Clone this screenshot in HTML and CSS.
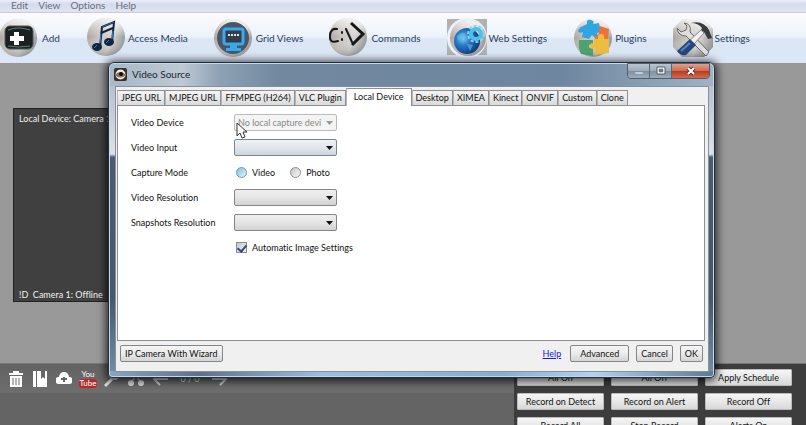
FILE: index.html
```html
<!DOCTYPE html>
<html lang="en">
<head>
<meta charset="utf-8">
<title>Video Source</title>
<link rel="stylesheet" href="styles.css">
</head>
<body>
<nav class="menubar">
  <a href="#">Edit</a><a href="#">View</a><a href="#">Options</a><a href="#">Help</a>
</nav>
<svg class="defs" width="0" height="0" aria-hidden="true">
  <defs>
    <linearGradient id="ball" x1="0" y1="0.300" x2="1" y2="0.700">
      <stop offset="0" stop-color="#a39d97"/><stop offset=".35" stop-color="#c9c4bf"/><stop offset=".65" stop-color="#d5d4d3"/><stop offset="1" stop-color="#8b8b8c"/>
    </linearGradient>
    <linearGradient id="shine" x1="0" y1="0" x2="0" y2="1">
      <stop offset="0" stop-color="#fff" stop-opacity=".8"/><stop offset=".5" stop-color="#fff" stop-opacity="0"/><stop offset="1" stop-color="#666" stop-opacity=".4"/>
    </linearGradient>
    <radialGradient id="globe" cx="35%" cy="40%" r="70%">
      <stop offset="0" stop-color="#7fd0f5"/><stop offset=".4" stop-color="#2779c4"/><stop offset="1" stop-color="#0c3478"/>
    </radialGradient>
  </defs>
</svg>
<header class="toolbar">
  <button class="tool"><svg viewBox="0 0 40 40"><circle cx="18" cy="20" r="19" fill="url(#ball)"/><circle cx="18" cy="20" r="19" fill="url(#shine)"/><rect x="5" y="8" width="28" height="23" rx="5" fill="#1b2020" stroke="#4d5758"/><path d="M8 12q10-4 22 0M8 28q10 2 22 0" stroke="#69797a" fill="none"/><path d="M14 14h5v4h5v5h-5v4h-5v-4h-4v-5h4z" fill="#fff"/></svg>Add</button>
  <button class="tool"><svg viewBox="0 0 40 40"><circle cx="20" cy="19" r="19" fill="url(#ball)"/><circle cx="20" cy="19" r="19" fill="url(#shine)"/><path d="M14 29l2-20 12-5-2 20" fill="none" stroke="#10233f" stroke-width="2"/><path d="M15 15l12-5" stroke="#10233f" stroke-width="2"/><path d="M16 9l12-5" stroke="#2b66a8" stroke-width="1"/><ellipse cx="11" cy="29" rx="5" ry="4" fill="#10233f"/><ellipse cx="23" cy="24" rx="5" ry="4" fill="#10233f"/><path d="M8 30l3-3M20 25l3-3M15 16l-1 9M27 13l-1 8" stroke="#2e83d8" stroke-width="1"/></svg>Access Media</button>
  <button class="tool"><svg viewBox="0 0 40 40"><circle cx="19" cy="20" r="19" fill="url(#ball)"/><circle cx="19" cy="20" r="19" fill="url(#shine)"/><circle cx="19" cy="20" r="16" fill="#49566a"/><rect x="10" y="11" width="19" height="15" rx="2" fill="#343c47" stroke="#38a9ec" stroke-width="3"/><path d="M16 27h7v3h4v3H12v-3h4z" fill="#38a9ec"/><path d="M14 17h11" stroke="#dce6ee" stroke-width="2" stroke-dasharray="2 1"/></svg>Grid Views</button>
  <button class="tool"><svg viewBox="0 0 40 40"><circle cx="19" cy="19" r="19" fill="url(#ball)"/><circle cx="19" cy="19" r="19" fill="url(#shine)"/><path d="M8 11Q2 10 1 17q-1 9 8 6M13 14v1M13 21v1M17 11l6 13" fill="none" stroke="#161616" stroke-width="2" stroke-linecap="round"/><path d="M22 5l12 11-11 11" fill="none" stroke="#161616" stroke-width="3"/></svg>Commands</button>
  <button class="tool"><svg viewBox="0 0 40 40"><path d="M0 1h40v36H0z" fill="#b0b1b2"/><circle cx="20" cy="20" r="20" fill="#eef1f5"/><circle cx="21" cy="20" r="18" fill="url(#ball)"/><circle cx="21" cy="20" r="18" fill="url(#shine)"/><circle cx="20" cy="23" r="13" fill="url(#globe)"/><path d="M10 18q5-5 9-2l-3 5-5 1zM20 26l6 1-3 6z" fill="#64bdea" opacity=".6"/><circle cx="29" cy="16" r="5" fill="none" stroke="#53bfe9" stroke-width="4"/><circle cx="29" cy="16" r="8" fill="none" stroke="#7ed7f4" stroke-width="2" stroke-dasharray="3 2"/></svg>Web Settings</button>
  <button class="tool"><svg viewBox="0 0 40 40"><circle cx="20" cy="20" r="19" fill="url(#ball)"/><circle cx="20" cy="20" r="19" fill="url(#shine)"/><path d="M6 10l8-4q-1-5 4-4 4 1 2 4l6-1 2 9-4 1q2 5-2 5l-3-3-3 4-7-2 1-5q-4 2-5-1 0-3 3-2z" fill="#31a5df"/><path d="M27 8l9 3-1 10h-5q-2 4-4 0h-4l1-4q4 0 3-5z" fill="#ee713b"/><path d="M6 22h14v4q-5 0-4 3 1 2 4 1v8l-12-2q-3-6-2-14z" fill="#4ea270"/><path d="M21 21h4q-1-5 3-5t3 5h5v14l-14 2v-7q-5 2-5-2t4-2z" fill="#edbd42"/></svg>Plugins</button>
  <button class="tool"><svg viewBox="0 0 40 40"><path d="M10 1h20l10 10v18l-9 10H9L0 29V11z" fill="url(#ball)"/><path d="M10 1h20l10 10v18l-9 10H9L0 29V11z" fill="url(#shine)"/><path d="M4 10l4 4 5-2 1-4-3-3q8 1 6 9l19 20-3 4-20-20q-8 0-9-8z" fill="#dededd" stroke="#686866"/><path d="M18 5q12-3 18 7l3 8-4 1-4-7-3-2 1-2q-4-5-11-5z" fill="#383b3e"/><path d="M28 12l3 3-10 11-4-4z" fill="#f1f1ef" stroke="#888"/><path d="M17 21l6 6-10 10q-6 1-9-4z" fill="#25477e"/><path d="M17 25l-9 8" stroke="#5f83b4" stroke-width="2"/></svg>Settings</button>
</header>
<main class="workspace">
  <section class="camera"><span>Local Device: Camera 1</span><span>!D&nbsp; Camera 1: Offline</span></section>
</main>
<footer class="bottom">
  <div class="media">
    <button aria-label="Delete"><svg viewBox="0 0 16 18" fill="#fff"><path d="M1 3h4V1h6v2h4v2H1zM2 6h12v11H2z"/><path d="M5 8v7M8 8v7M11 8v7" stroke="#666"/></svg></button>
    <button aria-label="Library"><svg viewBox="0 0 16 18" fill="#fff"><path d="M1 1h3v16H1zM5 1h4v8l2-2 2 2V1h2v16H5z"/></svg></button>
    <button aria-label="Upload"><svg viewBox="0 0 16 18"><path d="M3 14a3 3 0 0 1 0-7 5 5 0 0 1 10 0 3 3 0 0 1 0 7z" fill="#fff"/><path d="M8 7v5M5 9h6" stroke="#666" stroke-width="2"/></svg></button>
    <button class="youtube" aria-label="YouTube"><span>You</span><span>Tube</span></button>
    <button aria-label="Search"><svg viewBox="0 0 16 18" fill="none" stroke="#ddd" stroke-width="2"><circle cx="11" cy="5" r="4"/><path d="M8 9l-7 7" stroke-width="3"/></svg></button>
    <button aria-label="Cut"><svg viewBox="0 0 16 18" fill="#ddd"><circle cx="3" cy="13" r="3"/><circle cx="13" cy="13" r="3"/><path d="M3 12L12 1M13 12L4 1" stroke="#ddd"/></svg></button>
    <button aria-label="Previous"><svg viewBox="0 0 16 18" fill="none" stroke="#ccc" stroke-width="2"><path d="M8 3L2 9l6 6M2 9h14"/></svg></button>
    <span class="count">0 / 0</span>
    <button aria-label="Next"><svg viewBox="0 0 16 18" fill="none" stroke="#ccc" stroke-width="2"><path d="M8 3l6 6-6 6M14 9H0"/></svg></button>
  </div>
  <div class="commands">
    <button>All On</button><button>All Off</button><button>Apply Schedule</button>
    <button>Record on Detect</button><button>Record on Alert</button><button>Record Off</button>
    <button>Record All</button><button>Stop Record</button><button>Alerts On</button>
  </div>
</footer>

<div class="dialog" role="dialog" aria-labelledby="dialog-title">
  <div class="titlebar">
    <svg class="eye" viewBox="0 0 13 13"><rect width="13" height="13" rx="2" fill="#38302c"/><circle cx="6.500" cy="6.500" r="5" fill="#efe8e1"/><path d="M1 7q5-6 11 0-6 5-11 0z" fill="#8c6c58"/><circle cx="7" cy="6" r="2" fill="#120c0a"/></svg>
    <h1 id="dialog-title">Video Source</h1>
    <div class="window-buttons">
      <button aria-label="Minimize"><svg viewBox="0 0 12 10"><path d="M2 6h8v2H2z" fill="#d9dfe5" stroke="#8996a2" stroke-width=".5"/></svg></button>
      <button aria-label="Maximize"><svg viewBox="0 0 12 10"><path d="M2 1h8v7H2z" fill="#fff" stroke="#525a66"/><path d="M4 3h4v3H4z" fill="#738193" stroke="#525a66" stroke-width=".5"/></svg></button>
      <button class="close" aria-label="Close"><svg viewBox="0 0 12 10"><path d="M3 2l6 6M9 2L3 8" stroke="#62302a" stroke-width="4"/><path d="M3 2l6 6M9 2L3 8" stroke="#fff" stroke-width="2"/></svg></button>
    </div>
  </div>
  <form class="client">
    <div class="tabs" role="tablist">
      <button type="button" role="tab">JPEG URL</button><button type="button" role="tab">MJPEG URL</button><button type="button" role="tab">FFMPEG (H264)</button><button type="button" role="tab">VLC Plugin</button><button type="button" role="tab" aria-selected="true">Local Device</button><button type="button" role="tab">Desktop</button><button type="button" role="tab">XIMEA</button><button type="button" role="tab">Kinect</button><button type="button" role="tab">ONVIF</button><button type="button" role="tab">Custom</button><button type="button" role="tab">Clone</button>
    </div>
    <div class="page" role="tabpanel">
      <label for="device">Video Device</label>
      <div class="drop off"><select id="device" disabled><option>No local capture devices</option></select>
        <svg class="pointer" viewBox="0 0 12 18"><path d="M1 1v13l3-3 2 5 3-1-2-5h4z" fill="#fff" stroke="#333"/></svg></div>
      <label for="input">Video Input</label>
      <div class="drop blue"><select id="input"><option></option></select></div>
      <span>Capture Mode</span>
      <div class="choices"><label><input class="hot" type="radio" name="mode">Video</label><label><input type="radio" name="mode">Photo</label></div>
      <label for="resolution">Video Resolution</label>
      <div class="drop"><select id="resolution"><option></option></select></div>
      <label for="snapshots">Snapshots Resolution</label>
      <div class="drop"><select id="snapshots"><option></option></select></div>
      <div class="choices auto"><label><input type="checkbox" checked>Automatic Image Settings</label></div>
    </div>
    <div class="actions">
      <button type="button" class="wizard">IP Camera With Wizard</button>
      <a href="#">Help</a>
      <button type="button" class="advanced">Advanced</button>
      <button type="button">Cancel</button>
      <button type="button">OK</button>
    </div>
  </form>
</div>
</body>
</html>
```
FILE: styles.css
```css
* { box-sizing: border-box; }
body {
  margin: 0;
  height: 100vh;
  display: flex;
  flex-direction: column;
  overflow: hidden;
  position: relative;
  background: #999;
  color: #111;
  font: 9px/12px Lato, "Liberation Sans", sans-serif;
  font-variant-ligatures: none;
}
button, select, input { font: inherit; color: inherit; margin: 0; font-variant-ligatures: none; }
button { padding: 0; border: 0; background: none; white-space: nowrap; }
.defs { position: absolute; }

.menubar {
  display: flex;
  gap: 10px;
  height: 13px;
  padding-left: 11px;
  background: linear-gradient(#eceff8, #d5dcef 35%, #dfe4f3);
  border-bottom: 1px solid #cbc9dc;
  font-size: 10px;
  line-height: 11px;
}
.menubar a { color: #6b6e7b; text-decoration: none; }

.toolbar {
  display: flex;
  align-items: center;
  gap: 26px;
  height: 50px;
  background: linear-gradient(#fbfcfe, #edf2fa 48%, #dce6f4 52%, #dbe7f7);
}
.tool {
  display: flex;
  align-items: center;
  gap: 2px;
  color: #26405f;
  font-size: 10px;
}
.tool svg { width: 40px; height: 40px; flex: none; }

.workspace { flex: 1; min-height: 0; padding: 45px 13px; background: #999; }
.camera {
  display: flex;
  flex-direction: column;
  justify-content: space-between;
  width: 250px;
  height: 194px;
  padding: 4px 6px 0 5px;
  background: #404040;
  border: 1px solid #222;
  color: #f0f0f0;
}

.bottom {
  display: flex;
  align-items: flex-start;
  height: 62px;
  background: #646464;
  border-top: 1px solid #777;
}
.media {
  flex: 1;
  display: flex;
  align-items: center;
  gap: 8px;
  height: 29px;
  padding-left: 8px;
  background: linear-gradient(#626262, #6e6e6e);
  color: #ddd;
}
.media button { display: flex; width: 16px; height: 18px; }
.media svg { width: 16px; height: 18px; }
.media .youtube {
  flex-direction: column;
  align-items: center;
  font-size: 8px;
  line-height: 9px;
  color: #fff;
}
.youtube span:last-child { background: #b72a2a; border-radius: 3px; }
.count { width: 28px; text-align: center; }
.commands {
  display: grid;
  grid-template-columns: repeat(3, 87px);
  grid-auto-rows: 17px;
  gap: 7px;
  height: 61px;
  overflow: hidden;
  padding: 5px 14px 0 3px;
  background: #3d3d3d;
}
.commands button {
  border: 1px solid #bbb;
  border-radius: 1px;
  background: linear-gradient(#f5f5f5, #e8e8e8 50%, #d8d8d8);
}

.dialog {
  position: absolute;
  inset: 62px 91px 47px 108px;
  display: flex;
  flex-direction: column;
  padding: 0 5px 5px 6px;
  border: 1px solid #20303f;
  border-radius: 6px 6px 4px 4px;
  background:
    linear-gradient(90deg, #8aa6c0, #5e7286 15%, #9cbddd 35%, #89acd0 65%, #b4d2ee 80%, #61788f) bottom / 100% 6px no-repeat,
    linear-gradient(#a9b7c5, #dce2e7 29%, #4b5c70 30%, #46586b 75%, #7590aa);
  box-shadow: inset 0 0 0 1px #c6d8e9, 0 1px 9px 2px rgba(0, 0, 0, .75);
}
.titlebar {
  display: flex;
  gap: 5px;
  height: 22px;
  margin: 1px -4px 0 -5px;
  padding: 4px 3px 0 4px;
  border-radius: 5px 5px 0 0;
  background: linear-gradient(90deg, #a8b8c7, #bdc9d4 12%, #8fa2b5 18%, #71889f 28%, #6e86a0 75%, #a0b2c4);
}
.eye { width: 13px; height: 13px; }
h1 { margin: 0; flex: 1; font-size: 10px; line-height: 13px; font-weight: 400; color: #172432; }
.window-buttons {
  display: flex;
  height: 16px;
  margin-top: -5px;
  border: 1px solid #4f5d6d;
  border-radius: 0 0 4px 4px;
  overflow: hidden;
}
.window-buttons button {
  display: grid;
  place-items: center;
  width: 22px;
  border-right: 1px solid #56677a;
  background: linear-gradient(#bac5cf, #9dabb9 48%, #7c8ea1 50%, #9caebd);
}
.window-buttons .close { width: 37px; border: 0; background: linear-gradient(#e1a08e, #cc6c53 48%, #b73a1e 50%, #d5694b); }
.window-buttons svg { width: 12px; height: 10px; }

.client {
  flex: 1;
  display: flex;
  flex-direction: column;
  min-height: 0;
  padding: 2px 3px 6px 1px;
  border: 1px solid #87919c;
  background: #f0f0f0;
}
.tabs { display: flex; align-items: flex-end; height: 16px; }
.tabs button {
  height: 15px;
  padding: 0 3px;
  border: 1px solid #8c8f94;
  border-bottom: 0;
  border-left-color: #b5b5b5;
  background: linear-gradient(#f4f4f4, #e9e9e9 50%, #dadada);
}
.tabs [aria-selected] { height: 18px; margin-bottom: -1px; padding: 0 7px 2px; background: #fff; position: relative; }
.page {
  flex: 1;
  display: grid;
  grid-template-columns: 103px 1fr;
  grid-auto-rows: 25px;
  align-items: center;
  padding: 4px 14px 4px 13px;
  border: 1px solid #8c8f94;
  background: #fff;
}
.drop { position: relative; width: 103px; height: 17px; }
.drop::after {
  content: "";
  position: absolute;
  right: 4px;
  top: 7px;
  width: 7px;
  height: 4px;
  background: #111;
  clip-path: polygon(0 0, 100% 0, 50% 100%);
}
.drop select {
  appearance: none;
  display: block;
  width: 100%;
  height: 100%;
  padding: 0 15px 0 3px;
  border: 1px solid #858585;
  border-radius: 2px;
  background: linear-gradient(#efefef, #e5e5e5 50%, #d2d2d2);
}
.drop.blue select { border-color: #778894; background: linear-gradient(#eef2f5, #e0e6eb 50%, #cdd6dd); }
.drop.off select { border-color: #bbb; background: #f4f4f4; color: #888; opacity: 1; }
.drop.off::after { background: #999; }
.pointer { position: absolute; left: 2px; top: 8px; width: 12px; height: 18px; z-index: 1; }
.choices { display: flex; gap: 15px; padding-left: 2px; }
.choices label { display: flex; align-items: center; gap: 5px; }
.choices input {
  appearance: none;
  display: grid;
  place-items: center;
  width: 11px;
  height: 11px;
  border: 1px solid #8c8c8c;
  background: linear-gradient(135deg, #c4c4c4, #fafafa);
}
.choices input[type="radio"] { border-radius: 50%; }
.choices .hot { border-color: #6499bb; background: linear-gradient(135deg, #83bfe0, #e3f6ff); }
.choices input:checked::after {
  content: "";
  width: 4px;
  height: 7px;
  border: solid #324b91;
  border-width: 0 2px 2px 0;
  transform: rotate(40deg);
}
.auto { grid-column: 2; }
.actions { display: flex; align-items: center; gap: 7px; padding: 4px 2px 3px 3px; }
.actions button {
  height: 17px;
  padding: 0 4px;
  border: 1px solid #858585;
  border-radius: 2px;
  background: linear-gradient(#f5f5f5, #ebebeb 50%, #d4d4d4);
}
.actions .wizard { margin-right: auto; }
.actions .advanced { width: 59px; }
.actions a { color: #1818e0; padding-right: 2px; }
```
